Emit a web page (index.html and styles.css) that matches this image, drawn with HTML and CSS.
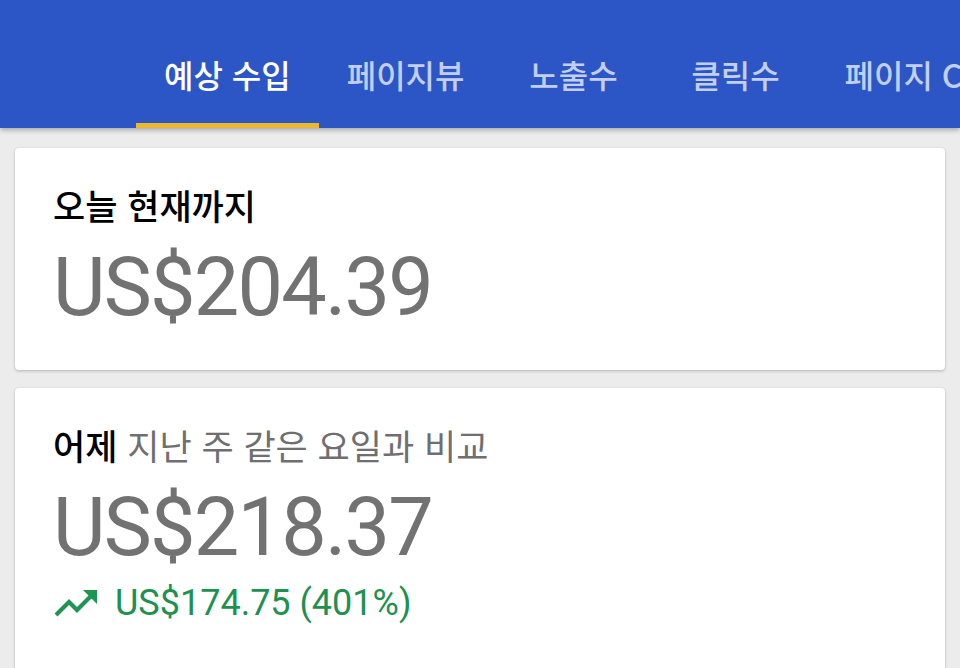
FILE: index.html
```html
<!DOCTYPE html>
<html lang="ko">

<head>
    <meta charset="UTF-8">
    <meta name="viewport" content="width=device-width, initial-scale=1.0">
    <title>AdSense</title>
    <link rel="stylesheet" href="styles.css">
</head>

<body>
    <header class="onglets">
        <div class="onglet actif">예상 수입</div>
        <div class="onglet">페이지뷰</div>
        <div class="onglet">노출수</div>
        <div class="onglet">클릭수</div>
        <div class="onglet">페이지 CTR</div>
    </header>

    <main class="contenu">
        <section class="carte carte-aujourdhui">
            <h2 class="titre">오늘 현재까지</h2>
            <div class="montant">US$204.39</div>
        </section>

        <section class="carte carte-hier">
            <h2 class="titre">어제 <span class="sous-titre">지난 주 같은 요일과 비교</span></h2>
            <div class="montant">US$218.37</div>
            <div class="variation">
                <svg width="46" height="30" viewBox="0 0 46 30">
                    <path d="M3 27 L16 14 L24 22 L40 6" fill="none" stroke="#1f9553" stroke-width="4.2" stroke-linejoin="miter"/>
                    <path d="M30 2 L44 2 L44 16 Z" fill="#1f9553"/>
                </svg>
                <span>US$174.75 (401%)</span>
            </div>
        </section>
    </main>
</body>

</html>
```

FILE: styles.css
```css
body {
    margin: 0;
    background-color: #ececec;
    font-family: Roboto, "Noto Sans CJK KR", sans-serif;
    overflow: hidden;
}

.onglets {
    display: flex;
    height: 128px;
    padding-left: 136px;
    background-color: #2c56c6;
    box-shadow: 0 2px 5px rgba(0, 0, 0, 0.3);
    position: relative;
    white-space: nowrap;
}

.onglet {
    display: flex;
    align-items: center;
    justify-content: center;
    flex-shrink: 0;
    box-sizing: border-box;
    min-width: 162px;
    padding: 24px 28px 0;
    border-bottom: 5px solid transparent;
    font-family: "Noto Sans CJK KR", Roboto, sans-serif;
    font-size: 32px;
    font-weight: 500;
    color: #c3cff0;
}

.onglet.actif {
    color: #ffffff;
    border-bottom-color: #ebb72e;
}

.contenu {
    padding: 20px 15px 0;
}

.carte {
    background-color: #ffffff;
    border-radius: 4px;
    box-shadow: 0 1px 3px rgba(0, 0, 0, 0.25);
    padding: 34px 38px 0;
    box-sizing: border-box;
}

.carte-aujourdhui {
    height: 222px;
    margin-bottom: 18px;
}

.carte-hier {
    height: 300px;
}

.titre {
    margin: 0;
    font-family: "Noto Sans CJK KR", sans-serif;
    font-size: 35px;
    font-weight: 500;
    line-height: 46px;
    color: #000000;
}

.sous-titre {
    font-weight: 400;
    color: #6f6f6f;
}

.montant {
    font-family: Roboto, sans-serif;
    font-size: 81px;
    letter-spacing: -1.8px;
    line-height: 96px;
    color: #727272;
    margin-top: 12px;
}

.variation {
    display: flex;
    align-items: center;
    gap: 16px;
    margin-top: 6px;
    font-family: Roboto, sans-serif;
    font-size: 36px;
    color: #1d9150;
}
```
